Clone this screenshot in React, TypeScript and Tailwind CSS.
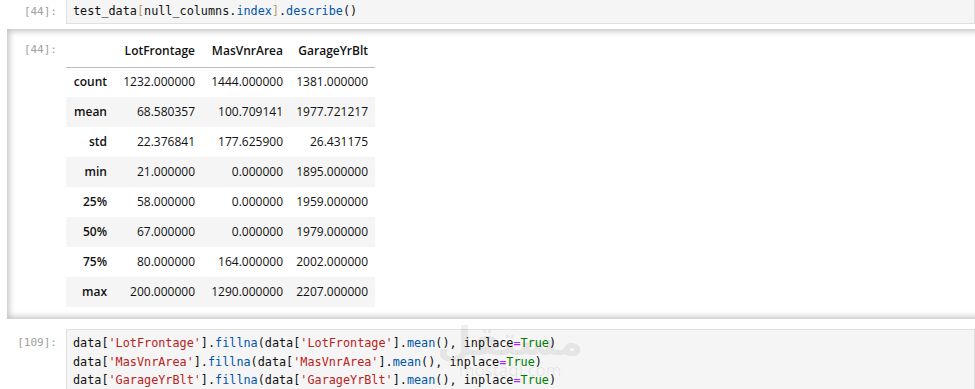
import React from "react";

const mono = { fontFamily: '"DejaVu Sans Mono", "Liberation Mono", monospace' };
const sans = { fontFamily: '"Open Sans", "Noto Sans", sans-serif' };

const S = ({ c }: { c: string }) => <span className="text-[#BA2121]">{c}</span>;
const M = ({ c }: { c: string }) => <span className="text-[#0055AA]">{c}</span>;

function Line({ col }: { col: string }) {
  return (
    <div className="whitespace-pre">
      data[<S c={`'${col}'`} />].<M c="fillna" />(data[<S c={`'${col}'`} />].<M c="mean" />(), inplace
      <span className="text-[#AA22FF]">=</span>
      <span className="text-[#008000]">True</span>)
    </div>
  );
}

const rows: [string, string, string, string][] = [
  ["count", "1232.000000", "1444.000000", "1381.000000"],
  ["mean", "68.580357", "100.709141", "1977.721217"],
  ["std", "22.376841", "177.625900", "26.431175"],
  ["min", "21.000000", "0.000000", "1895.000000"],
  ["25%", "58.000000", "0.000000", "1959.000000"],
  ["50%", "67.000000", "0.000000", "1979.000000"],
  ["75%", "80.000000", "164.000000", "2002.000000"],
  ["max", "200.000000", "1290.000000", "2207.000000"],
];

export default function App() {
  return (
    <div className="relative w-[975px] h-[389px] overflow-hidden bg-white text-[#111]">
      {/* Input cell 44 */}
      <div className="flex">
        <div className="w-[66px] shrink-0 pr-[9px] pt-[3px] text-right text-[11px] leading-[18px] text-[#a0a0a0]" style={mono}>
          [44]:
        </div>
        <div
          className="flex-1 -mt-[2px] h-[26px] border border-[#e0e0e0] bg-[#f5f5f5] pl-[6px] pt-[3px] text-[11.8px] leading-[18.5px]"
          style={mono}
        >
          <span className="whitespace-pre">
            test_data<span className="text-[#b89a6e]">[</span>null_columns.<M c="index" />
            <span className="text-[#b89a6e]">]</span>.<M c="describe" />()
          </span>
        </div>
      </div>

      {/* Output 44 */}
      <div className="ml-[7px] mt-[5px] mr-[-20px] h-[290px] flex shadow-[inset_0_0_6px_2px_rgba(0,0,0,0.25)]">
        <div className="w-[59px] shrink-0 pr-[9px] pt-[12px] text-right text-[11px] leading-[18px] text-[#a0a0a0]" style={mono}>
          [44]:
        </div>
        <div className="pt-[6px]" style={sans}>
          <table className="border-collapse text-[12px] text-[#111]">
            <thead>
              <tr className="h-[32px] border-b border-[#bdbdbd]">
                <th className="w-[47px]"></th>
                <th className="w-[88px] pr-[6px] text-right font-semibold">LotFrontage</th>
                <th className="w-[88px] pr-[6px] text-right font-semibold">MasVnrArea</th>
                <th className="w-[86px] pr-[7px] text-right font-semibold">GarageYrBlt</th>
              </tr>
            </thead>
            <tbody>
              {rows.map((r, i) => (
                <tr key={r[0]} className={i % 2 === 1 ? "h-[30px] bg-[#f5f5f5]" : "h-[30px]"}>
                  <th className="pr-[6px] text-right font-semibold">{r[0]}</th>
                  <td className="pr-[6px] text-right">{r[1]}</td>
                  <td className="pr-[6px] text-right">{r[2]}</td>
                  <td className="pr-[7px] text-right">{r[3]}</td>
                </tr>
              ))}
            </tbody>
          </table>
        </div>
      </div>

      {/* Input cell 109 */}
      <div className="flex mt-[10px]">
        <div className="w-[66px] shrink-0 pr-[9px] pt-[5px] text-right text-[11px] leading-[18px] text-[#a0a0a0]" style={mono}>
          [109]:
        </div>
        <div
          className="flex-1 h-[80px] border border-[#e0e0e0] bg-[#f5f5f5] pl-[6px] pt-[4px] text-[11.8px] leading-[18.5px]"
          style={mono}
        >
          <Line col="LotFrontage" />
          <Line col="MasVnrArea" />
          <Line col="GarageYrBlt" />
        </div>
      </div>

      {/* watermark */}
      <div className="pointer-events-none absolute left-[437px] top-[320px] flex flex-col items-center text-[rgba(0,0,0,0.07)]">
        <div className="text-[40px] font-bold leading-[42px]" style={{ fontFamily: '"DejaVu Sans", sans-serif' }}>
          مستقل
        </div>
        <div className="text-[17px] leading-[16px]" style={sans}>
          mostaql.com
        </div>
      </div>
    </div>
  );
}
